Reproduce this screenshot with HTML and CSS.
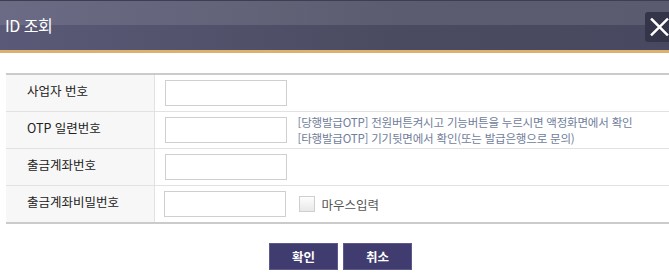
FILE: index.html
```html
<!DOCTYPE html>
<html lang="ko">
<head>
  <meta charset="UTF-8">
  <title>ID 조회</title>
  <link rel="stylesheet" href="styles.css">
</head>
<body>

  <div class="header">
    <h2>ID 조회</h2>
    <button class="close" aria-label="닫기">
      <svg width="20" height="20" viewBox="0 0 20 20">
        <path d="M2 2 L18 18 M18 2 L2 18" stroke="#fff" stroke-width="2.6" stroke-linecap="square"/>
      </svg>
    </button>
  </div>

  <div class="container">
    <table class="form-table">
      <tr>
        <th>사업자 번호</th>
        <td><input type="text" class="field"></td>
      </tr>
      <tr>
        <th>OTP 일련번호</th>
        <td>
          <div class="with-note">
            <input type="text" class="field">
            <p class="note">[당행발급OTP] 전원버튼켜시고 기능버튼을 누르시면 액정화면에서 확인<br>[타행발급OTP] 기기뒷면에서 확인(또는 발급은행으로 문의)</p>
          </div>
        </td>
      </tr>
      <tr>
        <th>출금계좌번호</th>
        <td><input type="text" class="field"></td>
      </tr>
      <tr>
        <th>출금계좌비밀번호</th>
        <td>
          <div class="with-note pw">
            <input type="password" class="field">
            <label class="mouse"><span class="check"></span>마우스입력</label>
          </div>
        </td>
      </tr>
    </table>

    <div class="buttons">
      <button class="btn">확인</button>
      <button class="btn">취소</button>
    </div>
  </div>

</body>
</html>
```

FILE: styles.css
```css
body {
  margin: 0;
  padding: 0;
  font-family: "Noto Sans CJK KR", "Noto Sans", sans-serif;
  background: #fff;
  width: 669px;
  overflow: hidden;
}
.header {
  display: flex;
  justify-content: space-between;
  align-items: center;
  height: 49px;
  border-top: 1px solid #3e3e52;
  border-bottom: 3px solid #dcb06e;
  background: linear-gradient(to bottom, rgba(255,255,255,0.1) 0, rgba(255,255,255,0.1) 24px, transparent 24px),
              linear-gradient(to right, #5a5a78, #4a4a60 60%, #484860);
  padding-left: 5px;
}
.header h2 {
  margin: 0;
  font-size: 16px;
  font-weight: normal;
  color: #fff;
  letter-spacing: -0.5px;
  position: relative;
  top: -1px;
}
.close {
  width: 24px;
  height: 30px;
  margin-top: 2px;
  padding: 5px 0 0 5px;
  border: 0;
  border-radius: 3px 0 0 3px;
  background: #35354a;
  display: flex;
  align-items: flex-start;
  justify-content: flex-start;
  overflow: hidden;
  box-sizing: border-box;
}
.container {
  padding: 20px 0 0 6px;
}
.form-table {
  width: 663px;
  border-collapse: collapse;
  border-top: 2px solid #cbcbcb;
  border-bottom: 2px solid #cbcbcb;
  font-size: 12.5px;
}
.form-table th,
.form-table td {
  height: 36px;
  padding: 0;
  border-bottom: 1px solid #e2e2e2;
}
.form-table th {
  width: 148px;
  background: #f7f7f7;
  border-right: 1px solid #e2e2e2;
  text-align: left;
  font-weight: normal;
  color: #222;
  padding: 0 0 5px 21px;
  box-sizing: border-box;
}
.form-table td {
  padding-left: 10px;
}
.field {
  display: block;
  width: 122px;
  height: 26px;
  box-sizing: border-box;
  border: 1px solid #cfcfcf;
  margin: 0;
}
.with-note {
  display: flex;
  align-items: center;
  gap: 11px;
}
.pw {
  gap: 13px;
  margin-left: -1px;
}
.note {
  margin: 0;
  font-size: 11.5px;
  line-height: 16px;
  color: #6f7d9a;
  letter-spacing: -0.2px;
}
.mouse {
  display: flex;
  align-items: center;
  gap: 7px;
  font-size: 12.5px;
  color: #555;
}
.check {
  display: inline-block;
  width: 14px;
  height: 14px;
  border: 1px solid #cfcfcf;
  background: linear-gradient(to bottom, #fdfdfd, #e8e8e8);
}
.buttons {
  display: flex;
  justify-content: center;
  gap: 5px;
  margin-top: 19px;
  padding-left: 6px;
}
.btn {
  width: 69px;
  height: 27px;
  border: 1px solid #5c5a8c;
  background: #403c70;
  color: #fff;
  font-family: inherit;
  font-size: 12.5px;
  font-weight: bold;
  padding: 0;
}
```
